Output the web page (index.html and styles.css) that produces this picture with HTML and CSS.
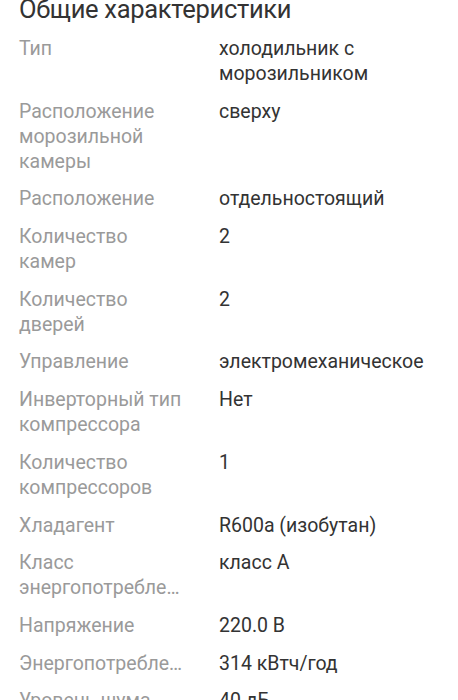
FILE: index.html
```html
<!DOCTYPE html>
<html lang="ru">
<head>
<meta charset="utf-8">
<link rel="stylesheet" href="styles.css">
</head>
<body>
<section class="specs">
  <h2 class="specs-title">Общие характеристики</h2>
  <dl class="spec-list">
    <div class="spec-row"><dt class="spec-label">Тип</dt><dd class="spec-value">холодильник с морозильником</dd></div>
    <div class="spec-row"><dt class="spec-label">Расположение морозильной камеры</dt><dd class="spec-value">сверху</dd></div>
    <div class="spec-row"><dt class="spec-label">Расположение</dt><dd class="spec-value">отдельностоящий</dd></div>
    <div class="spec-row"><dt class="spec-label">Количество камер</dt><dd class="spec-value">2</dd></div>
    <div class="spec-row"><dt class="spec-label">Количество дверей</dt><dd class="spec-value">2</dd></div>
    <div class="spec-row"><dt class="spec-label">Управление</dt><dd class="spec-value">электромеханическое</dd></div>
    <div class="spec-row"><dt class="spec-label">Инверторный тип компрессора</dt><dd class="spec-value">Нет</dd></div>
    <div class="spec-row"><dt class="spec-label">Количество компрессоров</dt><dd class="spec-value">1</dd></div>
    <div class="spec-row"><dt class="spec-label">Хладагент</dt><dd class="spec-value">R600a (изобутан)</dd></div>
    <div class="spec-row"><dt class="spec-label">Класс <span class="trunc">энергопотребления</span></dt><dd class="spec-value">класс А</dd></div>
    <div class="spec-row"><dt class="spec-label">Напряжение</dt><dd class="spec-value">220.0 В</dd></div>
    <div class="spec-row"><dt class="spec-label"><span class="trunc">Энергопотребление</span></dt><dd class="spec-value">314 кВтч/год</dd></div>
    <div class="spec-row"><dt class="spec-label">Уровень шума</dt><dd class="spec-value">40 дБ</dd></div>
  </dl>
</section>
</body>
</html>
```
FILE: styles.css
```css
html, body {
  margin: 0;
  padding: 0;
  background: #ffffff;
  overflow: hidden;
}
body {
  font-family: Roboto, "Noto Sans", sans-serif;
  -webkit-font-smoothing: antialiased;
}
.specs {
  padding: 0 19px;
  margin-top: -7px;
}
.specs-title {
  margin: 0 0 11px;
  font-size: 25.5px;
  font-weight: 400;
  letter-spacing: -0.3px;
  line-height: 32px;
  color: #333333;
}
.spec-list {
  margin: 0;
  display: flex;
  flex-direction: column;
  gap: 12.7px;
}
.spec-row {
  display: grid;
  grid-template-columns: 200px 1fr;
  font-size: 19.5px;
  line-height: 25px;
}
.spec-label {
  margin: 0;
  max-width: 167px;
  min-width: 0;
  color: #9a9a9a;
}
.trunc {
  display: block;
  white-space: nowrap;
  overflow: hidden;
  text-overflow: ellipsis;
}
.spec-value {
  margin: 0;
  color: #333333;
}
```
